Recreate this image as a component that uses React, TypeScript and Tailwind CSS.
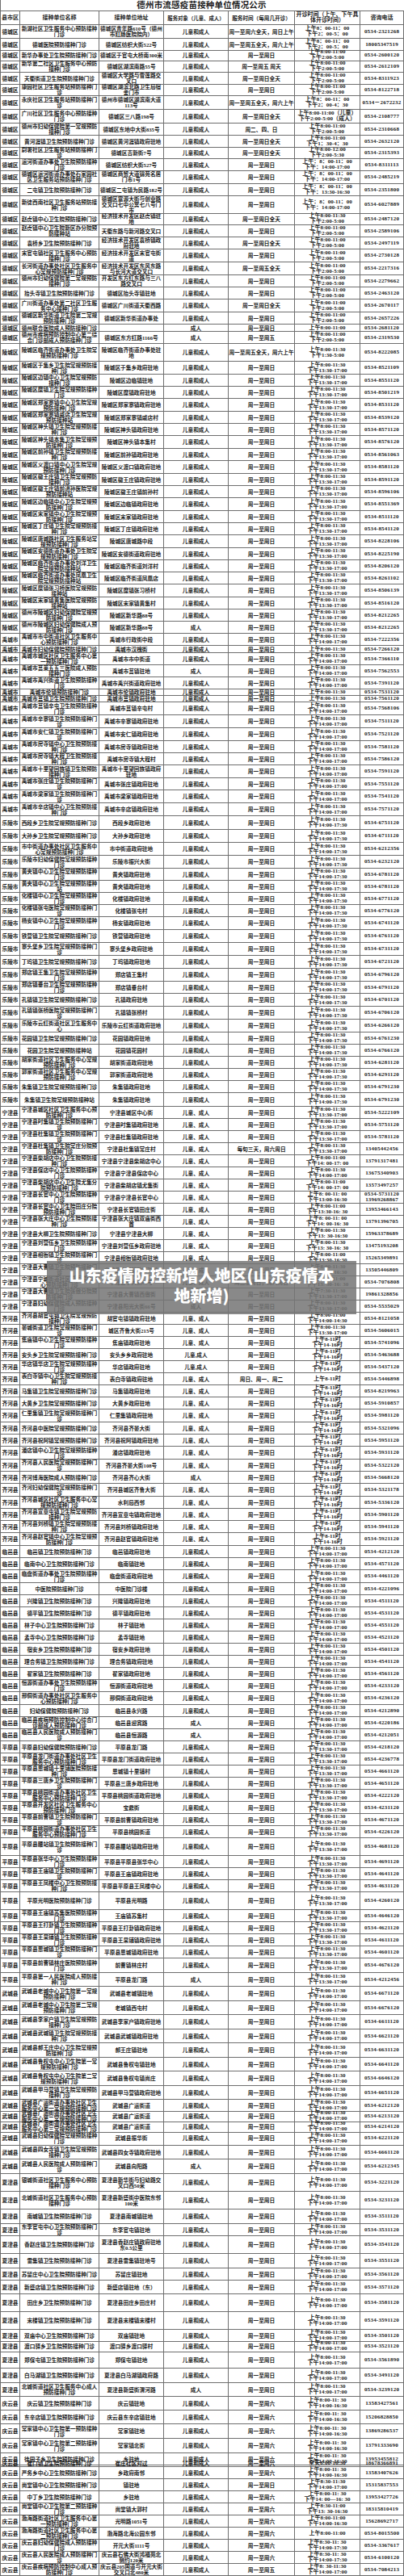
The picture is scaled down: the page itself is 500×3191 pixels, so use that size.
const FONT = "font-['Liberation_Serif','Noto_Sans_CJK_SC',serif]";

// county|name|address|target|days|hours(/ = new line)|phone|height
const RAW = `
德城区|新湖社区卫生服务中心预防接种门诊|德城区青年路610号（德州市肛肠医院院内）||周一至周六全天，周日上午|上午8：00-11：00/下午2：00-5：00|0534-2321268|17
德城区|德城医院预防接种门诊|德城区纺织大街522号||周一至周五全天，周六上午|上午8：00-11：00/下午2：00-5：00|18005347519|13
德城区|新华办事处卫生院预防接种门诊|德城区于官屯大桥南300米||周一至周日|上午8:00-11:00/下午2:00-5:00|0534-2600120|14
德城区|新华第二社区卫生服务中心预防接种门诊|德城区湖滨南路55号||周一至周五 周天|上午8:00-11:00/下午2:00-5:00|0534-2612109|15
德城区|天衢街道卫生院预防接种门诊|德城区大学路与雪莲路交叉口||周一至周日全天|上午8:00-11:00/下午2:00-5:00|0534-8311923|14
德城区|康园社区卫生服务站预防接种门诊|德城区湖滨北路卫生局宿舍门市||周一至周日|上午8:00-11:00/下午2:00-5:00|0534-8122718|15
德城区|永庆社区卫生服务站预防接种门诊|德州市德城区湖滨南大道113号||周一至周五全天，周六上午|上午8：00-11：00/下午2：00-4：30|0534－2672232|17
德城区|广川社区卫生服务中心预防接种门诊|德城区三八路198号||周一至周日全天|上午8:00-11:00（儿童）/下午2:00-5:00（成人）|0534-2108777|17
德城区|德州市妇幼保健院第一常规预防接种门诊|德城区东地中大街835号||周二、四、日|上午8:00-11:00/下午2:00-5:00|0534-2310668|15
德城区|黄河涯镇卫生院预防接种门诊|德城区黄河涯镇政府驻地||周一至周日全天|上午8:00-11:00/下午1：30-4：30|0534-2632120|14
德城区|尉署社区卫生服务站预防接种门诊|德城区吉新街7号||周一至周日全天|上午8:00-12:00/下午2:00-5:30|0534-2315393|15
德城区|运河街道办事处卫生院预防接种门诊|德城区纺织大街527号||周一至周日|上午：8：00-11：00/下午：14:00-17:00|0534-8311113|14
德城区|德城区运河街道办事处石家园社区卫生服务站预防接种门诊|德城区商贸大道锦苑名居门市1号||周一至周日|上午：8：00-11：00/下午：14:00-17:00|0534-2485219|17
德城区|二屯镇卫生院预防接种门诊|德城区二屯镇为民路182号||周一至周日|上午：8：00-11：00/下午：13:30-16:30|0534-2351800|15
德城区|新徒西南社区卫生服务站预防接种门诊|德城区富源大街与创业路交叉口七中公寓七八号门市||周一至周日|上午：8：00-11：00/下午：14:00-17:00|0534-6027889|21
德城区|赵虎镇中心卫生院预防接种门诊|经济技术开发区赵虎镇驻地||周一至周日全天|上午8:00-11:30/下午2:00-5:00|0534-2487120|15
德城区|赵虎镇中心卫生院新区办分院预防接种站|天衢东路与新河路交叉口||周一至周日|上午8:00-11:00/下午2:00-5:00|0534-2589106|15
德城区|袁桥乡卫生院预防接种门诊|经济技术开发区袁桥镇政府驻地||周一至周日全天||0534-2497119|15
德城区|宋官屯镇社区卫生服务中心预防接种门诊|经济技术开发区宋官屯街道||周一至周日||0534-2730128|16
德城区|长河街道办事处社区卫生服务中心常规预防接种门诊|经济技术开发区东风东路与长河大道交叉口||周一至周五全天||0534-2217316|16
德城区|德州市妇幼保健院第二常规预防接种门诊|开发区东方红东路与三八路交叉口||周一至周日||0534-2279662|15
德城区|抬头寺镇卫生院预防接种门诊|德城区抬头寺镇驻地||周一至周日||0534-2463120|15
德城区|广川街道办事处第二社区卫生服务中心接种门诊|德城区广川街道天衢西路||周一至周日全天||0534-2670117|16
德城区|德城区新华街道卫生院第二常规预防接种门诊|德城区新华街道办事处||周一至周日||0534-2657226|15
德城区|德州联合医院成人预防接种门诊| |成人|周一至周日|上午8:00-11:00|0534-2681120|9
德城区|德州市疾病预防控制中心第二综合门诊部成人预防接种门诊|德城区东方红路1166号|成人|周一至周五||0534-2319530|15
陵城区|陵城区临齐街道办事处卫生院常规预防接种门诊|陵城区临齐街道办事处驻地||周一至周五全天，周六上午|上午8:00-11:30/下午1:30-5:00|0534-8222085|22
陵城区|陵城区于集乡卫生院常规预防接种门诊|||||0534-8521109|16
陵城区|陵城区边镇中心卫生院常规预防接种门诊|陵城区边临镇驻地||||0534-8551120|15
陵城区|陵城区糜镇卫生院常规预防接种门诊|||||0534-8501219|15
陵城区|陵城区郑家寨镇中心卫生院常规预防接种门诊|||||0534-8531120|16
陵城区|陵城区郑家寨镇戚店卫生院常规预防接种站|陵城区郑家寨镇戚店村||||0534-8539120|15
陵城区|陵城区神头镇卫生院常规预防接种门诊|||||0534-8571120|15
陵城区|陵城区神头镇本集卫生院常规预防接种门诊|陵城区神头镇本集村||||0534-8576120|16
陵城区|陵城区前孙镇卫生院常规预防接种门诊|||||0534-8561063|15
陵城区|陵城区义渡口镇中心卫生院常规预防接种门诊|||||0534-8581120|16
陵城区|陵城区徽王庄镇卫生院常规预防接种门诊|||||0534-8591120|15
陵城区|陵城区徽王庄镇前进孙医院常规预防接种站|陵城区徽王庄镇前孙村||||0534-8596106|15
陵城区|陵城区边临镇中心卫生院常规预防接种门诊|||||0534-8551369|16
陵城区|陵城区宋家镇中心卫生院常规预防接种门诊|||||0534-8511120|15
陵城区|陵城区丁庄镇卫生院常规预防接种门诊|||||0534-8541120|15
陵城区|陵城区唐城路社区卫生服务站常规预防接种门诊|陵城区唐城路中段||||0534-8228106|16
陵城区|陵城区安德街道办事处卫生院常规预防接种门诊|||||0534-8225190|15
陵城区|陵城区临齐街道办事处刘洋卫生院常规预防接种站|陵城区临齐街道刘洋村||||0534-8206120|15
陵城区|陵城区临齐街道办事处凤凰卫生院常规预防接种站|陵城区临齐街道凤凰店||||0534-8261102|15
陵城区|陵城区糜镇张习桥医院常规预防接种站|陵城区糜镇张习桥村||||0534-8506139|16
陵城区|陵城区宋家镇黄集医院常规预防接种站|陵城区宋家镇黄集村||||0534-8516120|15
陵城区|德州市陵城区妇幼保健院常规预防接种门诊|陵城区新华路88号||||0534-8212265|15
陵城区|德州市陵城区妇幼保健院成人预防接种门诊|陵城区新华路88号|成人|||0534-8212265|15
禹城市|禹城市市中街道社区卫生服务中心预防接种门诊|禹城市行政街中段||||0534-7222356|15
禹城市|禹城市妇幼保健院预防接种门诊|禹城市汉槐街|||上午8:00-11:30|0534-7266120|9
禹城市|禹城市城区社区卫生服务中心第一预防接种门诊|禹城市市中街道||||0534-7366110|15
禹城市|禹城市莒莱五五三医院成人预防接种门诊|禹城市莒镇驻地|成人|||0534-7562553|15
禹城市|禹城市禹兴街道卫生院预防接种门诊|||||0534-7391120|15
禹城市|禹城市伦镇预防接种门诊||||上午8:00-11:30|0534-7531120|8
禹城市|禹城市莒镇卫生院预防接种门诊||||上午8:00-11:30|0534-7561120|8
禹城市|禹城市莒镇辛屯卫生院预防接种门诊|禹城市莒镇辛屯村||||0534-7568106|16
禹城市|禹城市辛寨镇卫生院预防接种门诊|||||0534-7511120|16
禹城市|禹城市安仁镇卫生院预防接种门诊|||||0534-7521120|16
禹城市|禹城市房寺镇中心卫生院预防接种门诊|||||0534-7581120|15
禹城市|禹城市房寺镇大程卫生院预防接种门诊|禹城市房寺镇大程村||||0534-7586120|15
禹城市|禹城市十里望回族镇卫生院预防接种门诊|||||0534-7591120|16
禹城市|禹城市张庄镇卫生院预防接种门诊|||||0534-7551120|15
禹城市|禹城市梁家镇卫生院预防接种门诊|||||0534-7541120|16
禹城市|禹城市辛店镇中心卫生院预防接种门诊|||||0534-7571120|16
乐陵市|西段乡卫生院常规预防接种门诊|||||0534-6751120|17
乐陵市|大孙乡卫生院常规预防接种门诊|||||0534-6711120|16
乐陵市|市中街道办事处社区卫生服务中心常规预防接种门诊|||||0534-6212356|16
乐陵市|乐陵市妇幼保健院常规预防接种门诊|乐陵市振兴大街||||0534-6232120|16
乐陵市|黄夹镇中心卫生院常规预防接种门诊|||||0534-6781120|15
乐陵市|黄夹镇中心卫生院常规预防接种站|||||0534-6781120|15
乐陵市|化楼镇中心卫生院常规预防接种门诊|||||0534-6771120|15
乐陵市|化楼镇张屯医院常规预防接种门诊|化楼镇张屯村||||0534-6776120|15
乐陵市|杨安镇中心卫生院常规预防接种门诊|||||0534-6741120|16
乐陵市|铁营镇卫生院常规预防接种门诊|||||0534-6761120|16
乐陵市|寨头堡乡卫生院常规预防接种门诊|||||0534-6731120|16
乐陵市|丁坞镇卫生院常规预防接种门诊|||||0534-6721120|16
乐陵市|郑店镇王集卫生院常规预防接种门诊|郑店镇王集村||||0534-6796120|16
乐陵市|郑店镇垂台卫生院常规预防接种门诊|郑店镇垂台村||||0534-6791120|15
乐陵市|孔镇镇卫生院常规预防接种门诊|||||0534-6701120|16
乐陵市|孔镇镇张桥医院常规预防接种门诊|孔镇镇张桥村||||0534-6706120|16
乐陵市|乐陵市云红街道社区卫生服务中心|||||0534-6266120|16
乐陵市|花园镇卫生院常规预防接种门诊|||||0534-6761230|15
乐陵市|花园卫生院常规预防接种站|花园镇花园村||||0534-6766120|15
乐陵市|胡家街道社区卫生服务中心常规预防接种门诊|||||0534-6281120|15
乐陵市|郭家街道社区卫生服务中心常规预防接种门诊|||||0534-6291120|15
乐陵市|朱集镇卫生院常规预防接种门诊|||||0534-6791230|15
乐陵市|朱集镇卫生院常规预防接种站|||||0534-6791230|17
宁津县|宁津县城区社区卫生服务中心预防接种门诊|宁津县城区中心街||||0534-5222109|15
宁津县|宁津县时集镇卫生院预防接种门诊|||||0534-5751120|15
宁津县|宁津县杜集镇卫生院预防接种门诊|||||0534-5781120|15
宁津县|宁津县杜集镇卫生院常庄分院预防接种门诊|宁津县杜集镇常庄村||每旬三天，周六周日|上午8:00-11:30/下午13:30-17:00|13405442456|15
宁津县|宁津县柴胡店中心卫生院预防接种门诊|||周一至周日|上午8:00-11:00/下午14: 00-17: 00|13791317481|15
宁津县|宁津县保店中心卫生院预防接种门诊|||周一至周日|上午8:00-11:30/下午14:00-17:00|13675340903|15
宁津县|宁津县柴胡店中心卫生院尤集分院预防接种门诊|宁津县柴胡店镇尤集街||周一至周日|上午8:00-11:00/下午14: 00-17: 00|13573497257|15
宁津县|宁津县长官中心卫生院预防接种门诊|||周一至周日|上午8: 00-11: 00/下午13:00-16:30|0534-5731120/13969268867|15
宁津县|宁津县长官中心卫生院田庄分院预防接种门诊|宁津县长官镇田庄街||周一至周日|上午8:00-11:00/下午13:30-16: 30|13953466143|15
宁津县|宁津县张大庄中心卫生院预防接种门诊|宁津县张大庄镇双庙街西首||周一至周日|上午8: 00-11: 00/下午14: 00-16: 30|13791396705|15
宁津县|宁津县大柳卫生院预防接种门诊|||周一至周日|上午8:00-11:30/下午13: 30-16:30|15963378689|15
宁津县|宁津县刘营伍乡卫生院预防接种门诊|||周一至周日|上午8:00-11:30/下午13: 30-16: 30|13475193208|15
宁津县|宁津县相衙镇卫生院预防接种门诊|||周一至周日|上午8:00-11:00/下午13:30-16:30|15265349891|15
宁津县|宁津县大曹镇卫生院预防接种门诊|||周一至周日|上午8:00-11:30/下午13:30-16:30|13505446809|15
宁津县|宁津县宁城街道社区卫生服务中心预防接种门诊|宁津县宁大街66号||周二至周日，周六周日|上午8:00-11:00/下午13: 30-16: 30|0534-7076808|15
宁津县|宁津县大曹镇卫生院张傲分院预防接种门诊|宁津县大曹镇西傲街||周一至周日|上午7:30-11:30/下午13:30-17:00|19861328856|15
宁津县|宁津县妇幼保健院成人预防接种门诊|宁津县阳光大街66号|成人|周一至周日|上午8:00-11:30/下午13:30-17:00|0534-5535029|15
齐河县|齐河县胡官屯镇卫生院常规预防接种门诊|胡官屯镇镇政府驻地||周一至周日|上午8:00-11:00/下午14:00-14:30|0534-8121058|15
齐河县|晏城街道卫生院常规预防接种门诊|城区齐鲁大街215号||周一至周日|上午8:00-11:30/下午13:30-17:00|0534-5606015|15
齐河县|焦庙镇中心卫生院常规预防接种门诊|||周一至周日||0534-5741096|15
齐河县|安头乡卫生院常规预防接种门诊|安头乡乡政府驻地|儿童,成人|周一至周日||0534-5463688|15
齐河县|华店镇华店卫生院常规预防接种门诊|华店镇政府驻地|儿童,成人|周一至周日||0534-5437120|15
齐河县|表白寺镇中心卫生院常规预防接种门诊|||周日、周一、周二|上午8-11时|0534-5446898|15
齐河县|马集镇卫生院常规预防接种门诊|||周一至周日||0534-8219963|15
齐河县|大黄乡卫生院常规预防接种门诊|||||0534-5910857|15
齐河县|仁里集镇卫生院常规预防接种门诊|||||0534-5981120|16
齐河县|齐河县中医院常规预防接种门诊|齐河县齐晏大街||||0534-5321096|15
齐河县|齐河县祝阿镇常规预防接种门诊|||||0534-5951120|15
齐河县|潘店镇中心卫生院常规预防接种门诊|||||0534-5931120|16
齐河县|齐河县人民医院常规预防接种门诊|齐河县齐晏大街108号||||0534-5322120|15
齐河县|齐河博海医院成人预防接种门诊|齐河县齐心大街|成人|||0534-5668120|15
齐河县|齐河妇幼保健院常规预防接种门诊|齐河县城区齐鲁大街||||0534-5321178|16
齐河县|齐河县城区社区卫生服务中心常规预防接种门诊|水利局西邻||||0534-5336120|15
齐河县|齐河县宣章屯镇卫生院常规预防接种门诊|||||0534-5901120|15
齐河县|齐河县刘桥镇卫生院常规预防接种门诊|||||0534-5941120|15
齐河县|齐河县赵官镇中心卫生院常规预防接种门诊|||||0534-5921120|16
临邑县|临邑镇卫生院预防接种门诊|||||0534-4212120|15
临邑县|临南中心卫生院预防接种门诊|临南镇驻地||||0534-4571120|15
临邑县|临盘街道办事处卫生院预防接种门诊|||||0534-4461120|16
临邑县|中医院预防接种门诊|中医院门诊楼||||0534-4221096|15
临邑县|兴隆镇卫生院预防接种门诊|||||0534-4511120|15
临邑县|德平镇卫生院预防接种门诊|||||0534-4531120|15
临邑县|林子中心卫生院预防接种门诊|林子镇驻地||||0534-4551120|15
临邑县|孟寺中心卫生院预防接种门诊|孟寺镇驻地||||0534-4521120|15
临邑县|宿安乡卫生院预防接种门诊|||||0534-4501120|15
临邑县|理合务镇卫生院预防接种门诊|||||0534-4541120|15
临邑县|翟家镇卫生院预防接种门诊|||||0534-4561120|15
临邑县|恒源街道办事处卫生院预防接种门诊|||||0534-4233120|15
临邑县|邢侗街道办事处社区卫生服务中心预防接种门诊|||||0534-4236120|16
临邑县|妇幼保健院预防接种门诊|临邑县永兴路||||0534-4212890|15
临邑县|临邑县疾病预防控制中心综合门诊部成人预防接种门诊|临邑县迎宾路|成人|||0534-4220186|15
临邑县|临邑县人民医院成人预防接种门诊|临邑县恒源路|成人|||0534-4212051|15
平原县|平原县妇幼保健院预防接种门诊|平原县龙门路||||0534-4218120|15
平原县|平原县龙门街道办事处社区卫生服务中心预防接种门诊|||||0534-4236778|15
平原县|平原县恩城镇十里铺医院预防接种门诊|恩城镇十里铺村||||0534-4661120|15
平原县|平原县三唐乡卫生院预防接种门诊|||||0534-4651120|15
平原县|平原县桃园街道办事处社区卫生服务中心预防接种门诊|||||0534-4222120|15
平原县|平原县开发区社区卫生服务中心预防接种门诊|宝鼎街||||0534-4231120|15
平原县|平原县前曹镇卫生院预防接种门诊|||||0534-4671120|15
平原县|平原县桃园街道办事处社区卫生服务中心预防接种门诊|平原县桃园街道||||0534-4226120|15
平原县|平原县腰站镇卫生院预防接种门诊|||||0534-4681120|22
平原县|平原县张华中心卫生院预防接种门诊|||||0534-4691120|15
平原县|平原县王庙镇卫生院预防接种门诊|||||0534-4641120|15
平原县|平原县王凤楼中心卫生院预防接种门诊|||||0534-4631120|15
平原县|平原光明医院预防接种门诊|平原县光明路||||0534-4260120|22
平原县|平原县王庙镇苏集医院预防接种门诊|王庙镇苏集村||||0534-4646120|15
平原县|平原县王打卦镇卫生院预防接种门诊|||||0534-4621120|15
平原县|平原县王杲铺镇卫生院预防接种门诊|||||0534-4611120|15
平原县|平原县恩城镇卫生院预防接种门诊|||||0534-4601120|15
平原县|平原县前曹镇林庄医院预防接种门诊|前曹镇林庄村||||0534-4676120|18
平原县|平原县第一人民医院成人预防接种门诊|平原县龙门路|成人|||0534-4212456|17
武城县|武城县老城中心卫生院第一常规预防接种门诊|武城县老城镇驻地||||0534-6671120|18
武城县|武城县老城中心卫生院第二常规预防接种门诊|老城镇西屯村||||0534-6676120|17
武城县|武城县李家户镇卫生院常规预防接种门诊|||||0534-6611120|18
武城县|武城县武城镇卫生院常规预防接种门诊|||||0534-6621120|17
武城县|武城县郝王庄中心卫生院常规预防接种门诊|郝王庄镇驻地||||0534-6631120|18
武城县|武城县鲁权屯中心卫生院第一常规预防接种门诊|武城县鲁权屯镇驻地||||0534-6641120|17
武城县|武城县鲁权屯中心卫生院第二常规预防接种门诊|武城县鲁权屯镇尚庄||||0534-6646120|18
武城县|武城县甲马营镇卫生院常规预防接种门诊|||||0534-6651120|17
武城县|武城县广运街道办事处社区卫生服务中心第一常规预防接种门诊|武城县广运街道||||0534-6212120|13
武城县|武城县广运街道办事处社区卫生服务中心第二常规预防接种门诊|武城县广运街道||||0534-6213120|13
武城县|武城县广运街道办事处社区卫生服务中心第三常规预防接种门诊|武城县广运街道||||0534-6214120|13
武城县|武城县妇幼保健院常规预防接种门诊|武城县振华街||||0534-6221120|18
武城县|武城县四女寺镇卫生院常规预防接种门诊|||||0534-6661120|17
武城县|武城县人民医院成人预防接种门诊|武城县向阳路|成人|||0534-6212345|18
夏津县|银城街道社区卫生服务中心预防接种门诊|夏津县新华街与妇幼路交叉口西50米||||0534-3221120|22
夏津县|北城街道社区卫生服务中心预防接种门诊|夏津县新盛街中医院东邻100米||||0534-3231120|22
夏津县|南城镇卫生院预防接种门诊|夏津县南城镇驻地||||0534-3511120|18
夏津县|东李官屯中心卫生院预防接种门诊|东李官屯镇驻地||||0534-3531120|15
夏津县|香赵庄镇卫生院预防接种门诊|夏津县香赵庄镇政府驻地东0.5公里||||0534-3541120|22
夏津县|雷集镇卫生院预防接种门诊|夏津县雷集镇驻地号||||0534-3551120|18
夏津县|苏留庄中心卫生院预防接种门诊|苏留庄镇驻地||||0534-3561120|15
夏津县|新盛店镇卫生院预防接种门诊|新盛店镇驻地（东）||||0534-3571120|17
夏津县|田庄乡卫生院预防接种门诊|夏津县田庄乡田庄村||||0534-3581120|22
夏津县|宋楼镇卫生院预防接种门诊|夏津县宋楼镇宋楼村||||0534-3591120|22
夏津县|双庙中心卫生院预防接种门诊|双庙镇驻地||||0534-3501120|13
夏津县|渡口驿乡卫生院预防接种门诊|渡口驿乡渡口驿村||||0534-3521120|15
夏津县|郑保屯镇卫生院预防接种门诊|郑保屯镇驻地||||0534-3561890|20
夏津县|白马湖镇卫生院预防接种门诊|夏津县白马湖镇政府路||||0534-3491120|18
夏津县|北城街道社区卫生服务中心成人预防接种门诊|夏津县新盛街渭河路|成人|||0534-3239120|17
庆云县|庆云镇卫生院预防接种门诊|庆云镇驻地||||13583427561|17
庆云县|东辛店镇卫生院预防接种门诊|庆云县东辛店镇驻地||||15206828850|17
庆云县|常家镇中心卫生院第一预防接种门诊|常家镇驻地||||13869286537|18
庆云县|常家镇中心卫生院第二预防接种门诊|常家镇北街||||13791333690|18
庆云县|徐园子乡卫生院预防接种门诊|乡驻地||||13953455812|8
庆云县|崔口镇卫生院预防接种门诊|崔庄社区对过|||全天8:00-16:30|18678366891|9
庆云县|严务乡中心卫生院预防接种门诊|乡政府南邻|||上午8:00-11: 30/下午14:00-16:30|13583407626|15
庆云县|尚堂镇中心卫生院预防接种门诊|镇驻地||周一至周日|上午8:30-11:30/下午14:00-17:00|15315837553|15
庆云县|中丁乡卫生院预防接种门诊|乡驻地|||上午8:00-11: 30/下午14: 00—16: 30|13953427726|15
庆云县|尚堂镇中心卫生院第二预防接种门诊|尚堂镇大郭村|||上午8:30-11:00/下午13: 30-16:30|18315810419|15
庆云县|渤海路街道社区卫生服务中心第一预防接种门诊|光明路1051号|||上午8:00-11:00/下午14:00-16:30|15628692717|15
庆云县|渤海路街道社区卫生服务中心第二预防接种门诊|渤海路北海公园东邻|||上午8:00-11:00|0534-8015500|15
庆云县|庆云县妇幼保健院成人预防接种门诊|开元大街1111号|||上午8:30-11: 30/下午14:00-17:30|0534-3367617|15
庆云县|庆云县人民医院成人预防接种门诊|庆云县石佛大街鸿福苑北侧约120米|||上午8:30-11: 30/下午14:00-17:30|0534-6100120|15
庆云县|庆云县疾病预防控制中心成人预防接种门诊|庆云县205国道与开元大街交叉口北480米||周一至周五|上午8: 30-11:30/下午14:00-17:00|0534-7084213|15
`;

const HOURS: Record<string, string> = {
  德城区: "上午8:00-11:00/下午2:00-5:00",
  陵城区: "上午8:00-11:30/下午13:30-17:00",
  禹城市: "上午8:00-11:30/下午14:00-17:00",
  乐陵市: "上午8:00-11:30/下午14:00-17:30",
  宁津县: "上午8:00-11:30/下午13:30-17:00",
  齐河县: "上午8-11时/下午14-16时",
  临邑县: "上午8:00-11:30/下午14:00-17:00",
  平原县: "上午8:00-11:30/下午13:30-17:00",
  武城县: "上午8:00-11:30/下午14:00-17:00",
  夏津县: "上午8:00-11:30/下午14:00-17:00",
  庆云县: "上午8:00-11: 30/下午14:00-16:30",
};

// when the address column is left empty, build one from the unit's name
function guessAddress(county: string, name: string) {
  const m = name.match(/^(.*?(镇|乡|街道))/);
  if (m) return m[1] + "政府驻地";
  return county + name.replace(/(卫生院|医院).*$/, "");
}

const rows = RAW.trim()
  .split("\n")
  .map((line) => {
    const [c, n, a, t, d, hr, p, h] = line.split("|");
    return {
      county: c,
      name: n,
      address: a === " " ? "" : a || guessAddress(c, n),
      target: t || (c === "宁津县" || c === "齐河县" ? "儿童、成人" : "儿童和成人"),
      days: d || (c === "庆云县" ? "周一至周六" : "周一至周日"),
      hours: (hr || HOURS[c]).split("/"),
      phone: p.split("/"),
      height: Number(h),
    };
  });

const GRID = "grid grid-cols-[24px_98px_80px_80px_82px_81px_54px]";
const CELL =
  "flex min-w-0 items-center justify-center border-r border-b border-[#6e6e6e] text-center";

function Lines({ items }: { items: string[] }) {
  return (
    <div className="flex flex-col items-center">
      {items.map((s, i) => (
        <span key={i} className="whitespace-nowrap">
          {s}
        </span>
      ))}
    </div>
  );
}

export default function App() {
  return (
    <div className={`relative w-[500px] bg-white text-[#1c1c1c] ${FONT}`}>
      {/* Title */}
      <div className="flex h-[13px] items-center justify-center border-l border-[#6e6e6e] pr-[2px]">
        <span className="text-[10.5px] leading-[12px] font-bold tracking-[0.2px]">
          德州市流感疫苗接种单位情况公示
        </span>
      </div>

      {/* Table */}
      <div className="border-t border-l border-[#6e6e6e] text-[6.7px] leading-[7px] font-bold">
        <div className={`${GRID} h-[17px] text-[7px]`}>
          <div className={CELL}>县市区</div>
          <div className={CELL}>接种单位名称</div>
          <div className={CELL}>接种单位地址</div>
          <div className={`${CELL} text-[6.4px]`}>服务对象（儿童、成人）</div>
          <div className={`${CELL} text-[6.6px]`}>服务时间（每周几开诊）</div>
          <div className={CELL}>
            <Lines items={["开诊时间（上午、下午具", "体开诊时间）"]} />
          </div>
          <div className={CELL}>咨询电话</div>
        </div>

        {rows.map((r, i) => (
          <div key={i} className={GRID} style={{ height: r.height }}>
            <div className={`${CELL} whitespace-nowrap`}>{r.county}</div>
            <div className={CELL}>{r.name}</div>
            <div className={CELL}>{r.address}</div>
            <div className={CELL}>{r.target}</div>
            <div className={CELL}>{r.days}</div>
            <div className={`${CELL} text-[7px]`}>
              <Lines items={r.hours} />
            </div>
            <div className={`${CELL} text-[7px] tracking-[0.2px]`}>
              <Lines items={r.phone} />
            </div>
          </div>
        ))}
      </div>

      {/* Caption over the table */}
      <div className="absolute top-[1562px] left-[58px] flex h-[66px] w-[383px] flex-col items-center bg-[rgba(118,118,118,0.86)] pt-[5px] font-['Noto_Sans_CJK_SC',sans-serif] text-[20px] leading-[25px] font-black text-white">
        <span>山东疫情防控新增人地区(山东疫情本</span>
        <span>地新增)</span>
      </div>
    </div>
  );
}
